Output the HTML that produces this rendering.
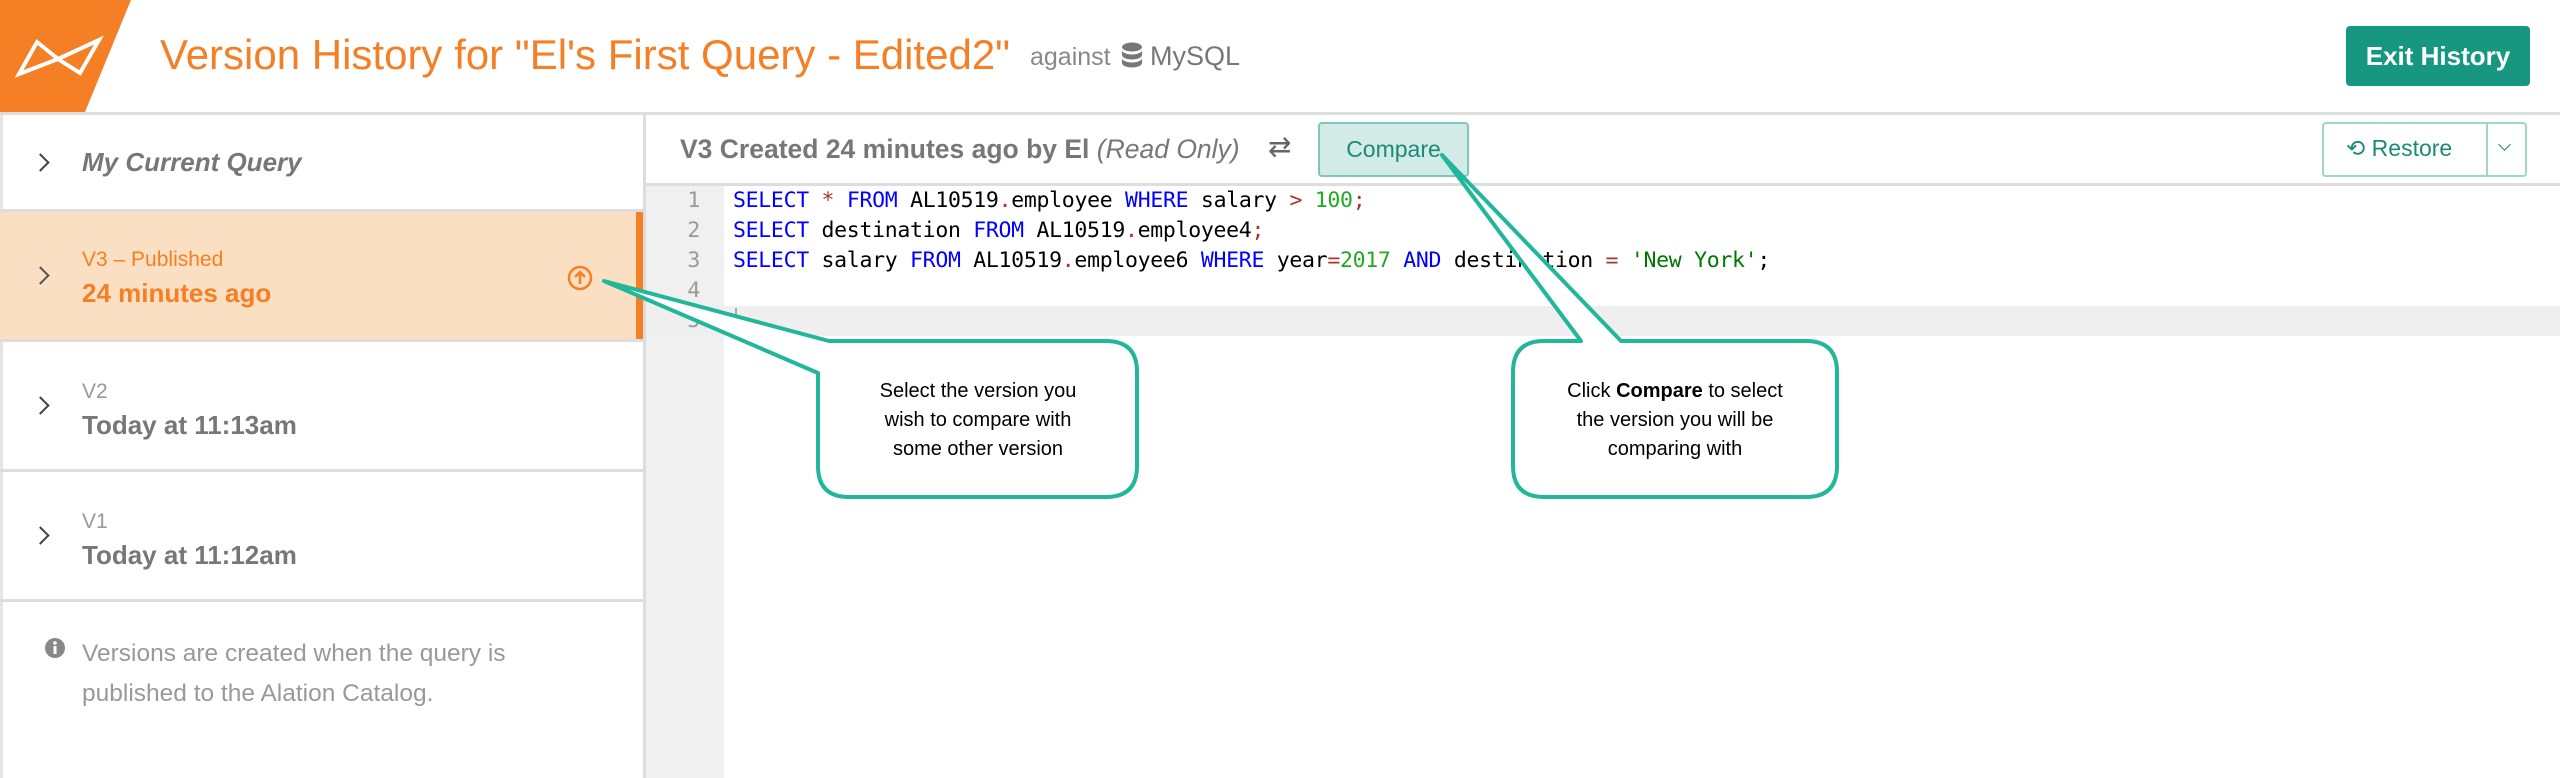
<!DOCTYPE html>
<html><head><meta charset="utf-8"><style>
*{margin:0;padding:0;box-sizing:border-box}
body{width:2560px;height:778px;position:relative;overflow:hidden;background:#fff;font-family:"Liberation Sans",Arial,sans-serif}
.a{position:absolute;white-space:nowrap}
.code{font-family:"DejaVu Sans Mono","Liberation Mono",monospace;font-size:21.5px;color:#000;letter-spacing:-0.3px}
.k{color:#00f}.o{color:#a33}.n{color:#2a2}.s{color:#070}
.chev{position:absolute;left:34px;width:13px;height:13px;border-right:2.5px solid #444;border-top:2.5px solid #444;transform:rotate(45deg)}
.row{position:absolute;left:0;width:643px;border-bottom:3px solid #ddd}
</style></head><body>
<!-- header -->
<svg class="a" style="left:0;top:0" width="135" height="112"><polygon points="0,0 131,0 85,112 0,112" fill="#f47f24"/>
<path d="M37,42 L58,59 L19,74 Z M58,59 L99,40 L80,73 Z" fill="none" stroke="#fff" stroke-width="4" stroke-linejoin="miter"/></svg>
<div class="a" style="left:160px;top:31px;font-size:42px;color:#f47f24;font-weight:500">Version History for "El's First Query - Edited2"</div>
<div class="a" style="left:1030px;top:43px;font-size:25px;color:#888">against</div>
<svg class="a" style="left:1121px;top:42px" width="22" height="28"><ellipse cx="11" cy="5" rx="10" ry="4.5" fill="#777"/><path d="M1,8 v5 a10,4.5 0 0 0 20,0 v-5 a10,4.5 0 0 1 -20,0z M1,16 v5 a10,4.5 0 0 0 20,0 v-5 a10,4.5 0 0 1 -20,0z" fill="#777"/></svg>
<div class="a" style="left:1150px;top:41px;font-size:27px;color:#777">MySQL</div>
<div class="a" style="left:2346px;top:26px;width:184px;height:60px;background:#17977f;border-radius:4px;color:#fff;font-weight:bold;font-size:26px;text-align:center;line-height:60px">Exit History</div>
<div class="a" style="left:0;top:112px;width:2560px;height:3px;background:#ddd"></div>
<!-- sidebar -->
<div class="a" style="left:0;top:115px;width:3px;height:663px;background:#e5e5e5"></div>
<div class="a" style="left:643px;top:115px;width:3px;height:663px;background:#ddd"></div>
<div class="row" style="top:115px;height:97px"><div class="chev" style="top:41px"></div><div class="a" style="left:82px;top:32px;font-size:26px;font-style:italic;font-weight:bold;color:#777">My Current Query</div></div>
<div class="row" style="top:212px;height:130px;background:#fbdfc3"><div class="a" style="right:0;top:0;width:7px;height:127px;background:#f47f24"></div>
<div class="chev" style="top:57px;border-color:#555"></div>
<div class="a" style="left:82px;top:36px;font-size:21px;color:#f47f24">V3 – Published</div>
<div class="a" style="left:82px;top:66px;font-size:26px;font-weight:bold;color:#f47f24">24 minutes ago</div>
<svg class="a" style="left:567px;top:53px" width="26" height="26"><circle cx="13" cy="13" r="11" fill="none" stroke="#f47f24" stroke-width="2.5"/><path d="M13,19 V8 M8,12 L13,7 L18,12" stroke="#f47f24" stroke-width="2.5" fill="none"/></svg></div>
<div class="row" style="top:342px;height:130px"><div class="chev" style="top:57px"></div>
<div class="a" style="left:82px;top:38px;font-size:21px;color:#999">V2</div>
<div class="a" style="left:82px;top:68px;font-size:26px;font-weight:bold;color:#777">Today at 11:13am</div></div>
<div class="row" style="top:472px;height:130px"><div class="chev" style="top:57px"></div>
<div class="a" style="left:82px;top:38px;font-size:21px;color:#999">V1</div>
<div class="a" style="left:82px;top:68px;font-size:26px;font-weight:bold;color:#777">Today at 11:12am</div></div>
<svg class="a" style="left:44px;top:637px" width="22" height="22"><circle cx="11" cy="11" r="10" fill="#888"/><rect x="9.5" y="9" width="3" height="8" fill="#fff"/><circle cx="11" cy="6" r="1.8" fill="#fff"/></svg>
<div class="a" style="left:82px;top:634px;font-size:24.5px;color:#999;line-height:40px">Versions are created when the query is<br>published to the Alation Catalog.</div>
<!-- toolbar -->
<div class="a" style="left:680px;top:134px;font-size:26.5px;color:#777;font-weight:bold">V3 Created 24 minutes ago by El <i style="font-weight:normal">(Read Only)</i></div>
<div class="a" style="left:1268px;top:130px;font-size:28px;color:#666">⇄</div>
<div class="a" style="left:1318px;top:122px;width:151px;height:55px;background:#d2ebe6;border:2px solid #7fc7b8;border-radius:4px;color:#1b8a78;font-size:23px;text-align:center;line-height:51px">Compare</div>
<div class="a" style="left:2322px;top:122px;width:205px;height:55px;border:2px solid #9fd6cb;border-radius:4px"></div>
<div class="a" style="left:2486px;top:122px;width:2px;height:55px;background:#9fd6cb"></div>
<div class="a" style="left:2346px;top:135px;font-size:23px;color:#1b8a78">⟲ Restore</div>
<div class="a" style="left:2500px;top:140px;width:9px;height:9px;border-right:1.5px solid #1b8a78;border-bottom:1.5px solid #1b8a78;transform:rotate(45deg)"></div>
<div class="a" style="left:645px;top:183px;width:1915px;height:3px;background:#ddd"></div>
<!-- editor -->
<div class="a" style="left:646px;top:186px;width:78px;height:592px;background:#f0f0f0"></div>
<div class="a" style="left:646px;top:306px;width:1914px;height:30px;background:#efefef"></div>
<div class="a code" style="left:680px;top:186px;color:#999;line-height:30px;text-align:right;width:20px">1<br>2<br>3<br>4<br>5</div>
<div class="a code" style="left:733px;top:186px;line-height:30px"><span class="k">SELECT</span> <span class="o">*</span> <span class="k">FROM</span> AL10519<span class="o">.</span>employee <span class="k">WHERE</span> salary <span class="o">&gt;</span> <span class="n">100</span><span class="o">;</span><br><span class="k">SELECT</span> destination <span class="k">FROM</span> AL10519<span class="o">.</span>employee4<span class="o">;</span><br><span class="k">SELECT</span> salary <span class="k">FROM</span> AL10519<span class="o">.</span>employee6 <span class="k">WHERE</span> year<span class="o">=</span><span class="n">2017</span> <span class="k">AND</span> destination <span class="o">=</span> <span class="s">'New York'</span>;</div>
<div class="a" style="left:735px;top:308px;width:2px;height:26px;background:#aaa"></div>
<!-- callouts -->
<svg class="a" style="left:0;top:0" width="2560" height="778">
<path d="M848,341 H1106 Q1137,341 1137,372 V466 Q1137,497 1106,497 H849 Q818,497 818,466 V373 L604,281 L829,341 Z" fill="#fff" stroke="#22b79b" stroke-width="4" stroke-linejoin="round"/>
<path d="M1581,341 L1442,155 L1621,341 H1806 Q1837,341 1837,372 V466 Q1837,497 1806,497 H1544 Q1513,497 1513,466 V372 Q1513,341 1544,341 Z" fill="#fff" stroke="#22b79b" stroke-width="4" stroke-linejoin="round"/>
</svg>
<div class="a" style="left:818px;top:377px;width:320px;text-align:center;font-size:20px;line-height:29px;color:#000">Select the version you<br>wish to compare with<br>some other version</div>
<div class="a" style="left:1513px;top:377px;width:324px;text-align:center;font-size:20px;line-height:29px;color:#000">Click <b>Compare</b> to select<br>the version you will be<br>comparing with</div>
</body></html>
